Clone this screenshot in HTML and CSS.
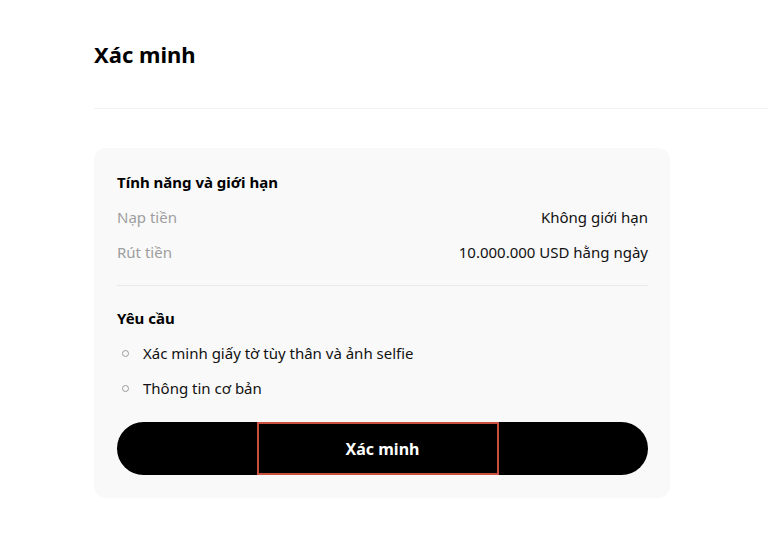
FILE: index.html
```html
<!DOCTYPE html>
<html lang="vi">
<head>
<meta charset="utf-8">
<link rel="stylesheet" href="styles.css">
</head>
<body>
<div class="page">
  <h1 class="title">Xác minh</h1>
  <div class="rule"></div>
  <div class="card">
    <div class="section-title">Tính năng và giới hạn</div>
    <div class="row"><span class="label">Nạp tiền</span><span class="value">Không giới hạn</span></div>
    <div class="row"><span class="label">Rút tiền</span><span class="value">10.000.000 USD hằng ngày</span></div>
    <div class="divider"></div>
    <div class="section-title req">Yêu cầu</div>
    <ul class="list">
      <li>Xác minh giấy tờ tùy thân và ảnh selfie</li>
      <li>Thông tin cơ bản</li>
    </ul>
    <button class="btn"><span class="highlight"></span><span class="btn-text">Xác minh</span></button>
  </div>
</div>
</body>
</html>
```

FILE: styles.css
```css
* { box-sizing: border-box; }
html, body { margin: 0; padding: 0; background: #fff; }
body { font-family: "Noto Sans", "Open Sans", sans-serif; color: #000; }
.page { padding: 39px 0 0 94px; }
.title { margin: 0; font-size: 22px; line-height: 30px; font-weight: 700; letter-spacing: 0; }
.rule { height: 1px; background: #f2f2f2; margin-top: 39px; }
.card { width: 576px; margin-top: 39px; background: #f9f9f9; border-radius: 12px; padding: 23px 22px 23px 23px; }
.section-title { font-size: 15px; line-height: 22px; font-weight: 700; }
.row { display: flex; justify-content: space-between; margin-top: 13px; font-size: 15px; line-height: 22px; }
.label { color: #9e9e9e; }
.value { color: #111; }
.divider { height: 1px; background: #e9e9e9; margin-top: 22px; }
.req { margin-top: 21px; }
.list { list-style: none; margin: 0; padding: 0; }
.list li { display: flex; align-items: center; margin-top: 13px; font-size: 15px; line-height: 22px; color: #111; }
.list li::before { content: ""; width: 5px; height: 5px; border: 1px solid #9a9a9a; border-radius: 50%; margin: 0 14px 0 5px; flex: none; }
.btn { position: relative; display: flex; align-items: center; justify-content: center; width: 100%; height: 53px; margin-top: 23px; border: 0; border-radius: 27px; background: #000; color: #fff; font-family: inherit; font-size: 16px; font-weight: 700; cursor: pointer; }
.highlight { position: absolute; left: 140px; top: 0; width: 242px; height: 53px; border: 2px solid #c9503f; }
.btn-text { position: relative; }
```
